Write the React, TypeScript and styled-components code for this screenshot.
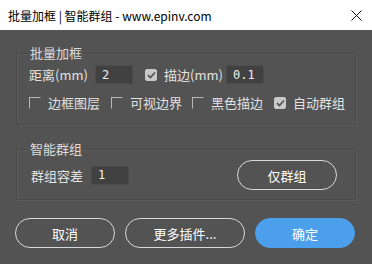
import React from 'react'
import styled, { createGlobalStyle } from 'styled-components'

const GlobalStyle = createGlobalStyle`
  html, body {
    margin: 0;
    padding: 0;
    background: #535353;
  }
  * {
    box-sizing: border-box;
  }
`

const CJK = `"Microsoft YaHei", "Noto Sans CJK SC", "Noto Sans", sans-serif`

const Window = styled.div`
  width: 372px;
  height: 264px;
  background: #535353;
  display: flex;
  flex-direction: column;
  font-family: ${CJK};
  overflow: hidden;
`
const TitleBar = styled.div`
  height: 30px;
  background: #ffffff;
  display: flex;
  align-items: center;
  padding: 0 10px 0 8px;
  font-size: 12px;
  color: #000;
`
const TitleText = styled.span`
  flex: 1;
`
const Close = styled.svg`
  width: 11px;
  height: 11px;
`
const Body = styled.div`
  padding: 14px 16px 0;
  display: flex;
  flex-direction: column;
`
const Group = styled.fieldset<{ $space?: number }>`
  margin: ${p => p.$space || 0}px 0 0;
  border: 1px solid #4a4a4a;
  box-shadow: inset 1px 1px 0 #5d5d5d, 1px 1px 0 #5d5d5d;
  padding: 0 18px 0 12px;
  min-width: 0;
`
const Legend = styled.legend`
  padding: 0 1px;
  margin-left: 0;
  font-size: 13px;
  line-height: 18px;
  color: #dcdcdc;
`
const Row = styled.div<{ $pt?: number; $pb?: number; $h?: number }>`
  display: flex;
  align-items: center;
  height: ${p => p.$h || 19}px;
  margin-top: ${p => p.$pt || 0}px;
  margin-bottom: ${p => p.$pb || 0}px;
`
const Label = styled.span<{ $w?: number }>`
  font-size: 13px;
  color: #e2e2e2;
  white-space: nowrap;
  width: ${p => (p.$w ? `${p.$w}px` : 'auto')};
  flex-shrink: 0;
`
const Input = styled.div`
  width: 38px;
  height: 19px;
  background: #414141;
  border: 1px solid #4b4b4b;
  border-radius: 2px;
  padding-left: 6px;
  display: flex;
  align-items: center;
  font-family: "DejaVu Sans Mono", "Liberation Mono", monospace;
  font-size: 12px;
  color: #f0f0f0;
`
const CheckItem = styled.div<{ $w?: number; $ml?: number }>`
  display: flex;
  align-items: center;
  gap: 7px;
  width: ${p => (p.$w ? `${p.$w}px` : 'auto')};
  margin-left: ${p => p.$ml || 0}px;
  margin-right: 7px;
  flex-shrink: 0;
`
const Box = styled.span<{ $on?: boolean }>`
  width: 12px;
  height: 12px;
  flex-shrink: 0;
  display: flex;
  align-items: center;
  justify-content: center;
  background: ${p => (p.$on ? '#c9c9c9' : 'transparent')};
  border-radius: ${p => (p.$on ? '2px' : '0')};
  border-top: 1px solid ${p => (p.$on ? '#c9c9c9' : '#b8b8b8')};
  border-left: 1px solid ${p => (p.$on ? '#c9c9c9' : '#b8b8b8')};
  border-right: 1px solid ${p => (p.$on ? '#c9c9c9' : 'transparent')};
  border-bottom: 1px solid ${p => (p.$on ? '#c9c9c9' : 'transparent')};
`
const Pill = styled.button<{ $w: number; $primary?: boolean }>`
  width: ${p => p.$w}px;
  height: 30px;
  border-radius: 15px;
  border: 1px solid ${p => (p.$primary ? '#4c9fea' : '#d8d8d8')};
  background: ${p => (p.$primary ? '#4c9fea' : 'transparent')};
  color: #ffffff;
  font-family: ${CJK};
  font-size: 13px;
  padding: 0;
  flex-shrink: 0;
`
const GroupButton = styled(Pill)`
  margin-left: auto;
`
const Footer = styled.div`
  display: flex;
  gap: 10px;
  padding: 18px 15px 0;
`

const Check = ({ on }: { on?: boolean }) => (
  <Box $on={on}>
    {on && (
      <svg width="9" height="8" viewBox="0 0 9 8">
        <path d="M1 4.2 L3.4 6.5 L8 1.5" stroke="#565656" strokeWidth="1.8" fill="none" />
      </svg>
    )}
  </Box>
)

export default function App() {
  return (
    <Window>
      <GlobalStyle />
      <TitleBar>
        <TitleText>批量加框 | 智能群组 - www.epinv.com</TitleText>
        <Close viewBox="0 0 11 11">
          <path d="M0.5 0.5 L10.5 10.5 M10.5 0.5 L0.5 10.5" stroke="#111" strokeWidth="1" />
        </Close>
      </TitleBar>
      <Body>
        <Group>
          <Legend>批量加框</Legend>
          <Row $pt={3}>
            <Label $w={66}>距离(mm)</Label>
            <Input>2</Input>
            <CheckItem $ml={12} style={{ marginRight: 0 }}>
              <Check on />
              <Label $w={62}>描边(mm)</Label>
            </CheckItem>
            <Input>0.1</Input>
          </Row>
          <Row $pt={9} $pb={12}>
            <CheckItem $w={75}>
              <Check />
              <Label>边框图层</Label>
            </CheckItem>
            <CheckItem $w={74}>
              <Check />
              <Label>可视边界</Label>
            </CheckItem>
            <CheckItem $w={75}>
              <Check />
              <Label>黑色描边</Label>
            </CheckItem>
            <CheckItem>
              <Check on />
              <Label>自动群组</Label>
            </CheckItem>
          </Row>
        </Group>
        <Group $space={15}>
          <Legend>智能群组</Legend>
          <Row $pt={2} $pb={9} $h={30}>
            <Label $w={62} style={{ paddingLeft: 2 }}>群组容差</Label>
            <Input>1</Input>
            <GroupButton $w={100}>仅群组</GroupButton>
          </Row>
        </Group>
      </Body>
      <Footer>
        <Pill $w={100}>取消</Pill>
        <Pill $w={120}>更多插件...</Pill>
        <Pill $w={100} $primary>确定</Pill>
      </Footer>
    </Window>
  )
}
